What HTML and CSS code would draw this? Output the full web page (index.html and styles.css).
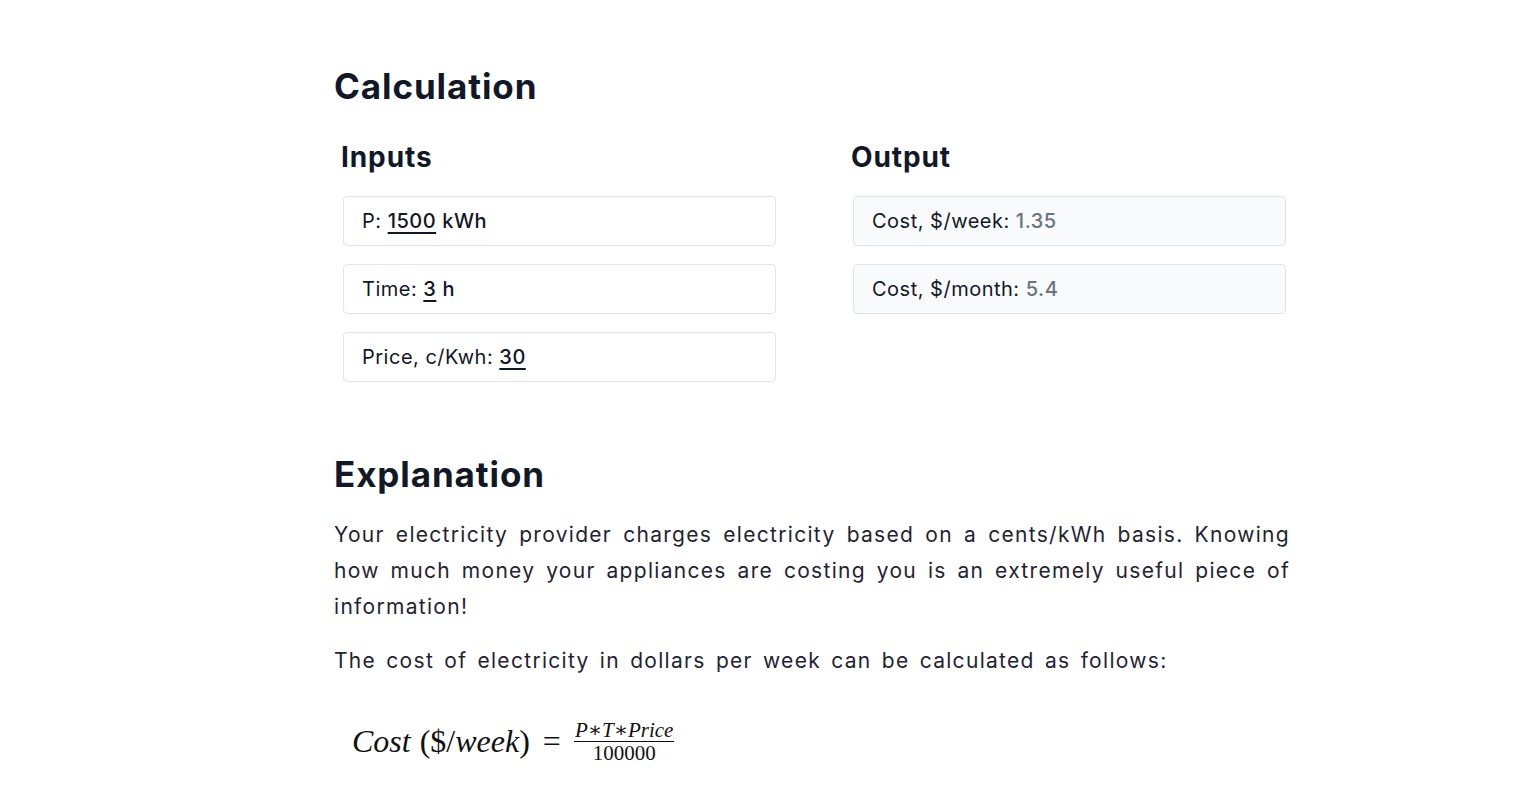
FILE: index.html
```html
<!DOCTYPE html>
<html>
<head>
<meta charset="utf-8">
<link rel="stylesheet" href="styles.css">
</head>
<body>
<main class="page">
  <h2 class="section-title">Calculation</h2>
  <div class="calc">
    <div class="col col-inputs">
      <h3 class="col-title">Inputs</h3>
      <div class="field"><span>P: <span class="val">1500</span> <span class="unit">kWh</span></span></div>
      <div class="field"><span>Time: <span class="val">3</span> <span class="unit">h</span></span></div>
      <div class="field"><span>Price, c/Kwh: <span class="val">30</span></span></div>
    </div>
    <div class="col col-output">
      <h3 class="col-title">Output</h3>
      <div class="field out"><span>Cost, $/week: <span class="res">1.35</span></span></div>
      <div class="field out"><span>Cost, $/month: <span class="res">5.4</span></span></div>
    </div>
  </div>
  <h2 class="section-title expl">Explanation</h2>
  <p class="text">Your electricity provider charges electricity based on a cents/kWh basis. Knowing how much money your appliances are costing you is an extremely useful piece of information!</p>
  <p class="text">The cost of electricity in dollars per week can be calculated as follows:</p>
  <div class="formula">
    <span class="mi">Cost</span><span class="sp"></span><span class="mo">(</span><span class="mo up">$</span><span class="mo up">/</span><span class="mi">week</span><span class="mo">)</span><span class="eq">=</span><span class="frac"><span class="num"><span class="mi">P</span><span class="ast">∗</span><span class="mi">T</span><span class="ast">∗</span><span class="mi">Price</span></span><span class="den">100000</span></span>
  </div>
</main>
</body>
</html>
```
FILE: styles.css
```css
* { box-sizing: border-box; }
html, body { margin: 0; padding: 0; background: #fff; }
body {
  font-family: Inter, "Noto Sans", sans-serif;
  color: #111827;
}
.page {
  width: 956px;
  margin-left: 334px;
  padding-top: 64px;
}
.section-title {
  font-size: 35px;
  font-weight: 700;
  margin: 0;
  line-height: 44px;
  letter-spacing: 0.9px;
}
.calc {
  display: flex;
  margin-top: 31px;
}
.col { flex: 0 0 auto; padding-left: 7px; }
.col-inputs { width: 510px; }
.col-output { width: 446px; }
.col-title {
  font-size: 28px;
  font-weight: 700;
  margin: 0 0 21px 0;
  line-height: 36px;
  letter-spacing: 0.9px;
}
.field {
  width: 433px;
  height: 50px;
  margin-left: 2px;
  margin-bottom: 18px;
  border: 1px solid #e3e4e8;
  border-radius: 4px;
  padding: 0 18px;
  display: flex;
  align-items: center;
  font-size: 20px;
  letter-spacing: 0.5px;
}
.field.out { background: #f9fafb; }
.val { text-decoration: underline; text-underline-offset: 4px; text-decoration-thickness: 2px; font-weight: 500; }
.unit { font-weight: 500; }
.res { color: #6b7280; font-weight: 500; }
.expl { margin-top: 52px; }
.text {
  font-size: 21px;
  line-height: 36px;
  margin: 21px 0 0 0;
  text-align: justify;
  color: #1f2433;
  letter-spacing: 1.3px;
  word-spacing: 3px;
}
.text + .text { margin-top: 18px; }
.formula {
  margin-top: 40px;
  padding-left: 18px;
  font-family: "Liberation Serif", "DejaVu Serif", serif;
  font-size: 32px;
  display: flex;
  align-items: center;
  color: #111;
}
.mi { font-style: italic; }
.sp { width: 9px; }
.mo { font-style: normal; }
.eq { margin: 0 13px; }
.frac { display: inline-flex; flex-direction: column; align-items: center; font-size: 21px; line-height: 22px; }
.num { border-bottom: 1px solid #111; padding: 0 1px; }
.ast { font-style: normal; }
```
